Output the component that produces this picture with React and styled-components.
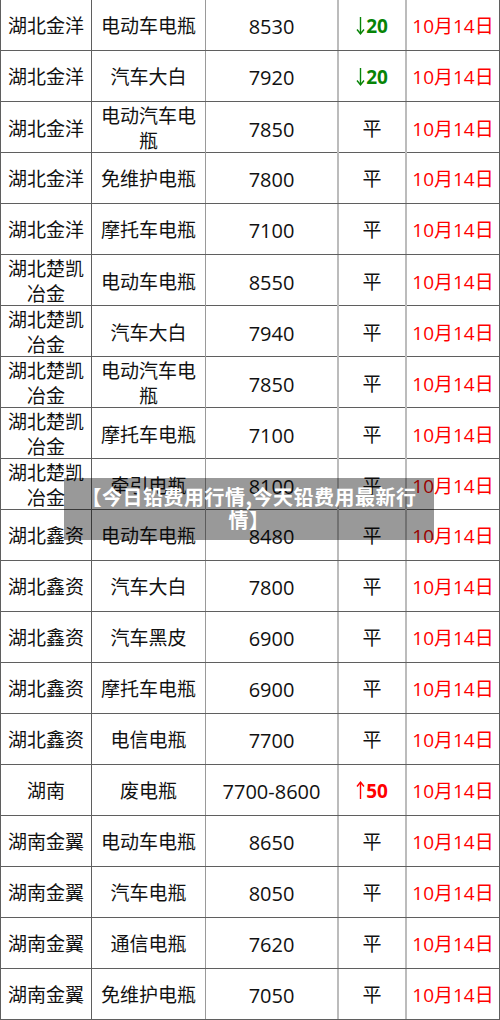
import React from "react";
import styled, { createGlobalStyle } from "styled-components";

const GlobalStyle = createGlobalStyle`
  html, body {
    margin: 0;
    padding: 0;
    background: #fff;
  }
  body {
    font-family: "Open Sans", "Noto Sans CJK SC", sans-serif;
    color: #111;
  }
`;

const rows = [
  ["湖北金洋", "电动车电瓶", "8530", "down", "20"],
  ["湖北金洋", "汽车大白", "7920", "down", "20"],
  ["湖北金洋", "电动汽车电瓶", "7850", "flat"],
  ["湖北金洋", "免维护电瓶", "7800", "flat"],
  ["湖北金洋", "摩托车电瓶", "7100", "flat"],
  ["湖北楚凯冶金", "电动车电瓶", "8550", "flat"],
  ["湖北楚凯冶金", "汽车大白", "7940", "flat"],
  ["湖北楚凯冶金", "电动汽车电瓶", "7850", "flat"],
  ["湖北楚凯冶金", "摩托车电瓶", "7100", "flat"],
  ["湖北楚凯冶金", "牵引电瓶", "8100", "flat"],
  ["湖北鑫资", "电动车电瓶", "8480", "flat"],
  ["湖北鑫资", "汽车大白", "7800", "flat"],
  ["湖北鑫资", "汽车黑皮", "6900", "flat"],
  ["湖北鑫资", "摩托车电瓶", "6900", "flat"],
  ["湖北鑫资", "电信电瓶", "7700", "flat"],
  ["湖南", "废电瓶", "7700-8600", "up", "50"],
  ["湖南金翼", "电动车电瓶", "8650", "flat"],
  ["湖南金翼", "汽车电瓶", "8050", "flat"],
  ["湖南金翼", "通信电瓶", "7620", "flat"],
  ["湖南金翼", "免维护电瓶", "7050", "flat"],
];

// thin tall arrow, like the one in the sheet
const ArrowIcon = ({ up }) => (
  <svg width="9" height="19" viewBox="0 0 9 19" style={{ transform: up ? "rotate(180deg)" : "none" }}>
    <path d="M4.5 1 V17.5" stroke="currentColor" strokeWidth="1.4" fill="none" />
    <path d="M1 13.5 L4.5 17.8 L8 13.5" stroke="currentColor" strokeWidth="1.4" fill="none" />
  </svg>
);

const Change = ({ dir, value }) => {
  if (dir === "flat") return <Flat>平</Flat>;
  return (
    <Move $dir={dir}>
      <ArrowIcon up={dir === "up"} />
      {value}
    </Move>
  );
};

const App = () => {
  return (
    <Page>
      <GlobalStyle />
      <Table>
        {rows.map((r, i) => (
          <Row key={i}>
            <Cell $line="dark">{r[0]}</Cell>
            <Cell $line="mid">{r[1]}</Cell>
            <Cell $line="wide" $num>{r[2]}</Cell>
            <Cell $line="wide">
              <Change dir={r[3]} value={r[4]} />
            </Cell>
            <Cell $line="none">
              <DateText>10月14日</DateText>
            </Cell>
          </Row>
        ))}
      </Table>

      <Caption>【今日铅费用行情,今天铅费用最新行情】</Caption>
    </Page>
  );
};

export default App;

const Page = styled.div`
  position: relative;
  width: 500px;
  height: 1020px;
  overflow: hidden;
`;

const Table = styled.div`
  width: 500px;
  box-sizing: border-box;
  border-left: 1px solid #5f5f5f;
  border-right: 1px solid #5f5f5f;
`;

const Row = styled.div`
  display: grid;
  grid-template-columns: 91px 114px 133px 68px 92px;
  height: 51px;
  box-sizing: border-box;
  border-bottom: 1px solid #5f5f5f;
`;

const lines = {
  dark: "1px solid #5f5f5f",
  mid: "1px solid #9a9a9a",
  wide: "2px solid #bcbcbc",
  none: "none",
};

const Cell = styled.div`
  display: flex;
  align-items: center;
  justify-content: center;
  text-align: center;
  box-sizing: border-box;
  padding: 2px 5px 0;
  border-right: ${(p) => lines[p.$line]};
  font-size: ${(p) => (p.$num ? "20px" : "19px")};
  line-height: 25px;
  word-break: break-all;
`;

const Flat = styled.span`
  font-size: 19px;
  color: #111;
`;

const Move = styled.span`
  display: inline-flex;
  align-items: center;
  gap: 1px;
  font-size: 19px;
  font-weight: 700;
  color: ${(p) => (p.$dir === "up" ? "#ff0000" : "#078407")};

  svg {
    margin-top: -1px;
  }
`;

const DateText = styled.span`
  font-size: 19px;
  color: #ff0000;
  white-space: nowrap;
`;

const Caption = styled.div`
  position: absolute;
  top: 478px;
  left: 64px;
  width: 370px;
  box-sizing: border-box;
  padding: 7px 14px 9px;
  background: rgba(0, 0, 0, 0.4);
  color: #fff;
  font-family: "Noto Sans CJK SC", sans-serif;
  font-size: 20px;
  font-weight: 700;
  letter-spacing: 0.5px;
  line-height: 23px;
  text-align: center;
`;
